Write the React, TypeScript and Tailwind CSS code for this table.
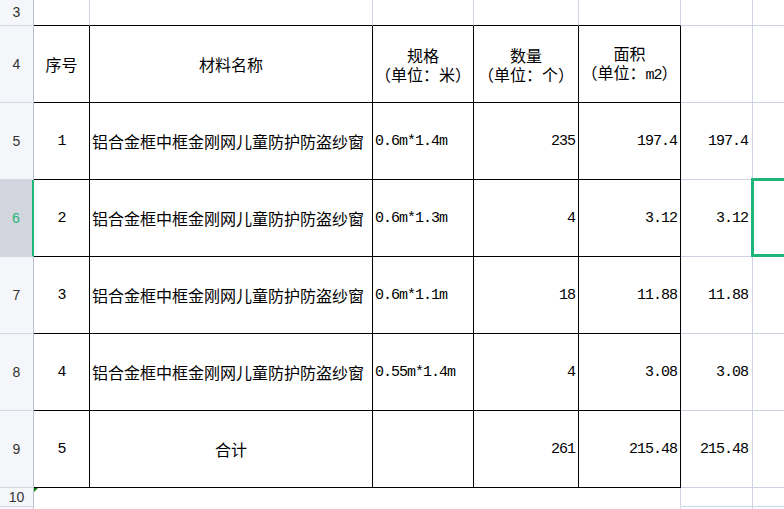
import React from "react";

const CJK = "font-['Noto_Sans_CJK_SC',sans-serif] text-[16px] leading-[18px] text-black";
const MONO = "font-['Liberation_Mono',monospace] text-[15px] leading-[18px] tracking-[-1px] text-black translate-y-[1px]";

type Kind = "grid" | "black" | "none";

const R: Record<Kind, string> = {
  grid: "border-r border-r-[#cdd3e2]",
  black: "border-r border-r-black",
  none: "border-r border-r-transparent",
};
const B: Record<Kind, string> = {
  grid: "border-b border-b-[#cdd3e2]",
  black: "border-b border-b-black",
  none: "border-b border-b-transparent",
};

type CellProps = {
  children?: React.ReactNode;
  r?: Kind;
  b?: Kind;
  cls?: string;
};

function Cell({ children, r = "grid", b = "grid", cls = "" }: CellProps) {
  return (
    <div className={`relative ${R[r]} ${B[b]} flex items-center whitespace-nowrap ${cls}`}>
      {children}
    </div>
  );
}

function T({ children, cls = "" }: { children?: React.ReactNode; cls?: string }) {
  return (
    <Cell r="black" b="black" cls={cls}>
      {children}
    </Cell>
  );
}

function RowHead({ n, active = false }: { n?: number; active?: boolean }) {
  return (
    <div
      className={`flex items-center justify-center border-b border-b-[#d3d8e4] font-['Liberation_Sans',sans-serif] text-[14px] ${
        active
          ? "bg-[#d3d6de] text-[#1fb57a] border-r-2 border-r-[#1fb57a]"
          : "bg-[#f5f6f9] text-[#333333] border-r border-r-[#b9c1d3]"
      }`}
    >
      {n}
    </div>
  );
}

const rows = [
  { no: "1", spec: "0.6m*1.4m", qty: "235", area: "197.4" },
  { no: "2", spec: "0.6m*1.3m", qty: "4", area: "3.12" },
  { no: "3", spec: "0.6m*1.1m", qty: "18", area: "11.88" },
  { no: "4", spec: "0.55m*1.4m", qty: "4", area: "3.08" },
];

export default function App() {
  return (
    <div className="w-[784px] h-[509px] overflow-hidden bg-white">
      <div className="grid grid-cols-[34px_56px_283px_101px_105px_102px_72px_40px] grid-rows-[26px_repeat(6,77px)_19px_20px]">
        {/* Row 3 */}
        <RowHead n={3} />
        <Cell b="black" />
        <Cell b="black" />
        <Cell b="black" />
        <Cell b="black" />
        <Cell b="black" />
        <Cell />
        <Cell />

        {/* Row 4 header */}
        <RowHead n={4} />
        <T cls="justify-center">
          <span className={CJK}>序号</span>
        </T>
        <T cls="justify-center">
          <span className={CJK}>材料名称</span>
        </T>
        <T cls="justify-center">
          <div className={`${CJK} flex flex-col items-center gap-[1px]`}>
            <span>规格</span>
            <span>（单位：米）</span>
          </div>
        </T>
        <T cls="justify-center">
          <div className={`${CJK} flex flex-col items-center gap-[1px]`}>
            <span>数量</span>
            <span>（单位：个）</span>
          </div>
        </T>
        <T cls="justify-center">
          <div className={`${CJK} flex flex-col items-center gap-[1px]`}>
            <span>面积</span>
            <span>
              （单位：<span className="font-['Liberation_Mono',monospace] text-[15px] tracking-[-1px]">m2</span>）
            </span>
          </div>
        </T>
        <Cell />
        <Cell />

        {rows.map((row, i) => (
          <React.Fragment key={row.no}>
            <RowHead n={5 + i} active={i === 1} />
            <T cls="justify-center">
              <span className={MONO}>{row.no}</span>
            </T>
            <T cls="pl-[2px]">
              <span className={CJK}>铝合金框中框金刚网儿童防护防盗纱窗</span>
            </T>
            <T cls="pl-[2px]">
              <span className={MONO}>{row.spec}</span>
            </T>
            <T cls="justify-end pr-[3px]">
              <span className={MONO}>{row.qty}</span>
            </T>
            <T cls="justify-end pr-[3px]">
              <span className={MONO}>{row.area}</span>
            </T>
            <Cell cls="justify-end pr-[4px]">
              <span className={MONO}>{row.area}</span>
            </Cell>
            <Cell>
              {i === 1 && (
                <div className="absolute -left-[2px] -top-[2px] -bottom-[1px] -right-[20px] border-[3px] border-[#1fb57a]" />
              )}
            </Cell>
          </React.Fragment>
        ))}

        {/* Row 9 total */}
        <RowHead n={9} />
        <T cls="justify-center">
          <span className={MONO}>5</span>
        </T>
        <T cls="justify-center">
          <span className={CJK}>合计</span>
        </T>
        <T />
        <T cls="justify-end pr-[3px]">
          <span className={MONO}>261</span>
        </T>
        <T cls="justify-end pr-[3px]">
          <span className={MONO}>215.48</span>
        </T>
        <Cell cls="justify-end pr-[4px]">
          <span className={MONO}>215.48</span>
        </Cell>
        <Cell />

        {/* Row 10 */}
        <RowHead n={10} />
        <Cell r="none" b="none">
          <div className="absolute left-0 top-0 w-0 h-0 border-t-[4px] border-t-[#0f7a12] border-r-[4px] border-r-transparent" />
        </Cell>
        <Cell r="none" b="none" />
        <Cell r="none" b="none" />
        <Cell r="none" b="none" />
        <Cell b="none" />
        <Cell />
        <Cell />

        {/* Row 11 */}
        <RowHead />
        <Cell r="none" b="none" />
        <Cell r="none" b="none" />
        <Cell r="none" b="none" />
        <Cell r="none" b="none" />
        <Cell />
        <Cell />
        <Cell />
      </div>
    </div>
  );
}
